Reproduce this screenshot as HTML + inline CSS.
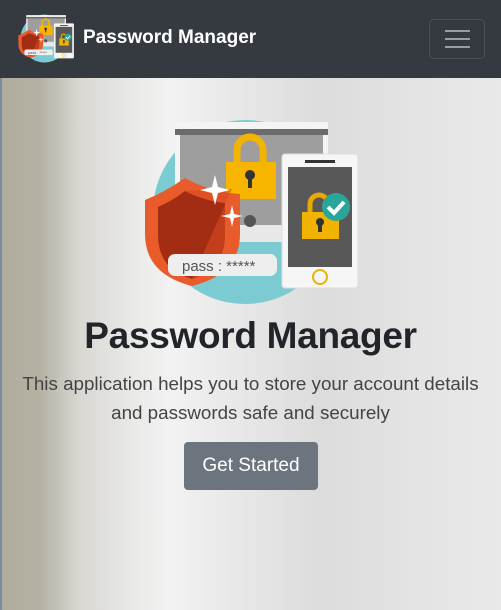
<!DOCTYPE html>
<html><head><meta charset="utf-8"><style>
*{margin:0;padding:0;box-sizing:border-box}
body{width:501px;height:610px;overflow:hidden;font-family:"Liberation Sans",sans-serif;background:linear-gradient(90deg,#7d8ba0 0,#7d8ba0 2px,#b0ad9e 2px,#b4b1a3 40px,#d9d8d3 80px,#ebebea 140px,#f2f2f2 170px,#e6e6e6 250px,#dcdcdc 320px,#e4e4e4 420px,#e9e9e9 501px)}
nav{height:78px;background:#343a40;position:relative}
.brand{position:absolute;left:83px;top:27px;color:#fff;font-weight:bold;font-size:19px}
.tog{position:absolute;left:429px;top:19px;width:56px;height:40px;border:1px solid #4b5158;border-radius:5px}
.tog i{position:absolute;left:15px;width:25px;height:2px;background:#9a9da1}
h1{position:absolute;left:0;width:501px;top:315px;text-align:center;font-size:37px;font-weight:bold;color:#212529;letter-spacing:-0.3px}
p{position:absolute;left:0;width:501px;top:369px;text-align:center;font-size:18.8px;line-height:29px;color:#444;font-weight:300}
.btn{position:absolute;left:184px;top:442px;width:134px;height:48px;background:#6c757d;border-radius:4px;color:#fff;font-size:19px;text-align:center;line-height:48px}
</style></head><body>
<svg width="0" height="0" style="position:absolute"><defs>
<g id="ill">
<circle cx="245" cy="212" r="92" fill="#7ccbd3"/>
<rect x="175" y="122" width="153" height="120" fill="#f4f4f4"/>
<rect x="175" y="129" width="153" height="6" fill="#6b6b6b"/>
<rect x="180" y="135" width="143" height="90" fill="#9e9e9e"/>
<rect x="180" y="225" width="143" height="17" fill="#e8e8e8"/>
<circle cx="250" cy="221" r="6" fill="#555"/>
<path d="M237 162v-12a13 13 0 0 1 26 0v12" fill="none" stroke="#f2b400" stroke-width="7"/>
<rect x="226" y="162" width="50" height="37" fill="#f7b500"/>
<circle cx="250" cy="175" r="5" fill="#333"/><rect x="248" y="175" width="4" height="13" fill="#333"/>
<rect x="282" y="154" width="76" height="134" rx="3" fill="#f6f6f6" stroke="#ddd"/>
<rect x="288" y="167" width="64" height="100" fill="#585858"/>
<rect x="305" y="160" width="30" height="3" fill="#333"/>
<circle cx="320" cy="277" r="7" fill="none" stroke="#e8b400" stroke-width="2"/>
<path d="M310 212v-8a9 9 0 0 1 18 0v8" fill="none" stroke="#e8a900" stroke-width="5"/>
<rect x="302" y="212" width="37" height="27" fill="#f2b200"/>
<circle cx="320" cy="222" r="4" fill="#333"/><rect x="318" y="222" width="4" height="10" fill="#333"/>
<circle cx="336" cy="207" r="14" fill="#2aa59a"/>
<path d="M328 207l6 6 10-11" fill="none" stroke="#fff" stroke-width="4"/>
<path d="M145 200q20-8 40-22q25 14 55 16v40q0 40-48 52q-47-12-47-52z" fill="#e95b2b"/>
<path d="M158 207q14-6 27-16q20 10 40 12v32q0 34-33 44q-34-10-34-44z" fill="#a32d12"/>
<path d="M185 191q20 10 40 12v32q0 34-33 44l40-90z" fill="#d84a20" opacity=".6"/>
<path d="M215 175l3 12 12 3-12 3-3 12-3-12-12-3 12-3z" fill="#fff"/>
<path d="M232 205l2 9 9 2-9 2-2 9-2-9-9-2 9-2z" fill="#fff"/>
<rect x="168" y="254" width="109" height="22" rx="7" fill="#eee"/>
<text x="182" y="271" font-family="Liberation Sans,sans-serif" font-size="15" fill="#555">pass : *****</text>
</g></defs></svg>
<nav>
<svg style="position:absolute;left:17px;top:12px" width="60" height="52" viewBox="140 110 230 200"><use href="#ill"/></svg>
<div class="brand">Password Manager</div>
<div class="tog"><i style="top:10px"></i><i style="top:18px"></i><i style="top:26px"></i></div>
</nav>
<svg style="position:absolute;left:140px;top:110px" width="230" height="200" viewBox="140 110 230 200"><use href="#ill"/></svg>
<h1>Password Manager</h1>
<p>This application helps you to store your account details<br>and passwords safe and securely</p>
<div class="btn">Get Started</div>
</body></html>
